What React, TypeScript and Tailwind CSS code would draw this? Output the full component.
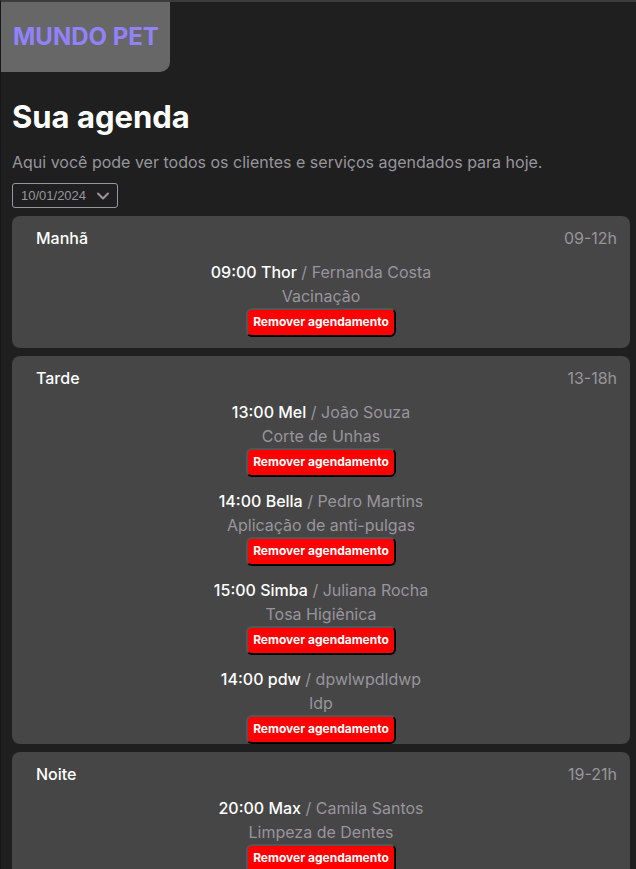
import { ChevronDown } from "lucide-react";

type Appointment = {
  time: string;
  pet: string;
  owner: string;
  service: string;
};

type Period = {
  name: string;
  hours: string;
  spacing: string;
  appointments: Appointment[];
};

const periods: Period[] = [
  {
    name: "Manhã",
    hours: "09-12h",
    spacing: "pb-[11px]",
    appointments: [
      { time: "09:00", pet: "Thor", owner: "Fernanda Costa", service: "Vacinação" },
    ],
  },
  {
    name: "Tarde",
    hours: "13-18h",
    spacing: "pb-0",
    appointments: [
      { time: "13:00", pet: "Mel", owner: "João Souza", service: "Corte de Unhas" },
      { time: "14:00", pet: "Bella", owner: "Pedro Martins", service: "Aplicação de anti-pulgas" },
      { time: "15:00", pet: "Simba", owner: "Juliana Rocha", service: "Tosa Higiênica" },
      { time: "14:00", pet: "pdw", owner: "dpwlwpdldwp", service: "ldp" },
    ],
  },
  {
    name: "Noite",
    hours: "19-21h",
    spacing: "pb-[11px]",
    appointments: [
      { time: "20:00", pet: "Max", owner: "Camila Santos", service: "Limpeza de Dentes" },
    ],
  },
];

function AppointmentItem({ time, pet, owner, service }: Appointment) {
  return (
    <li className="flex flex-col items-center">
      <p>
        <strong className="font-medium text-white">
          {time} {pet}
        </strong>{" "}
        / {owner}
      </p>
      <p>{service}</p>
      <button
        type="button"
        className="h-[29px] rounded-md border-2 border-t-[#555555] border-r-black border-b-black border-l-[#555555] bg-[#ff0000] px-[5px] pb-0.5 text-xs font-bold text-white"
      >
        Remover agendamento
      </button>
    </li>
  );
}

function PeriodCard({ name, hours, spacing, appointments }: Period) {
  return (
    <section className={`rounded-lg bg-[#464646] pt-[10px] ${spacing}`}>
      <header className="flex justify-between pr-[13px] pl-6">
        <h2 className="font-medium text-white">{name}</h2>
        <span>{hours}</span>
      </header>
      <ul className="mt-[10px] flex flex-col gap-3">
        {appointments.map((item) => (
          <AppointmentItem key={`${item.time}-${item.pet}`} {...item} />
        ))}
      </ul>
    </section>
  );
}

export default function App() {
  return (
    <div className="h-screen overflow-hidden border-t-2 border-l border-t-[#3c3c3c] border-l-[#171717] bg-[#1f1f1f] font-['Inter',sans-serif] text-base text-[#98959d]">
      <div className="flex">
        <div className="rounded-br-[10px] bg-[#676767] pt-[17px] pr-[11px] pb-[17px] pl-3 text-2xl leading-9 font-bold text-[#9282fa]">
          MUNDO PET
        </div>
      </div>
      <main className="pt-6 pr-[6px] pl-[11px]">
        <h1 className="text-[31px] leading-[42px] font-bold text-white">Sua agenda</h1>
        <p className="mt-3">
          Aqui você pode ver todos os clientes e serviços agendados para hoje.
        </p>
        <div className="relative mt-[9px] w-[106px]">
          <select
            aria-label="Data da agenda"
            className="block h-[25px] w-full appearance-none rounded-[3px] border border-[#98959d] bg-transparent pl-2 font-['Liberation_Sans',sans-serif] text-[13px] leading-5"
          >
            <option>10/01/2024</option>
          </select>
          <ChevronDown
            aria-hidden="true"
            className="pointer-events-none absolute top-[3px] right-[5px] size-5"
            strokeWidth={2.5}
          />
        </div>
        <div className="mt-2 flex flex-col gap-2">
          {periods.map((period) => (
            <PeriodCard key={period.name} {...period} />
          ))}
        </div>
      </main>
    </div>
  );
}
